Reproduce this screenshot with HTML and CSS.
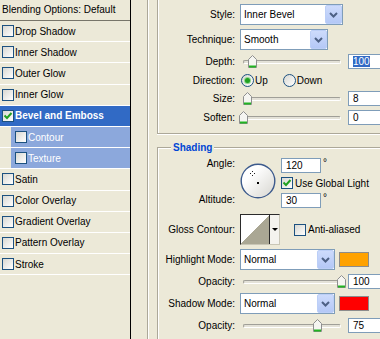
FILE: index.html
```html
<!DOCTYPE html>
<html lang="en">
<head>
  <meta charset="UTF-8">
  <meta name="viewport" content="width=device-width, initial-scale=1.0">
  <title>Layer Style - Bevel and Emboss</title>
  <link rel="stylesheet" href="styles.css">
</head>
<body>

  <!-- shared glyphs -->
  <svg class="defs" width="0" height="0">
    <symbol id="tick" viewBox="0 0 10 10">
      <polyline points="1.5,4.5 4,7 8.5,2" fill="none" stroke="#21a121" stroke-width="2"/>
    </symbol>
    <symbol id="chevron" viewBox="0 0 9 6">
      <polyline points="1,1 4.5,4.5 8,1" fill="none" stroke="#4d6185" stroke-width="2"/>
    </symbol>
    <symbol id="knob" viewBox="0 0 9 13">
      <path d="M0.5 4.5 L4.5 0.5 L8.5 4.5 V12.5 H0.5 Z" fill="#f5f5f1" stroke="#8e8f8f"/>
      <path d="M1 11.5 H8" stroke="#21b421" stroke-width="2"/>
    </symbol>
  </svg>

  <div class="dialog">

    <!-- Styles list -->
    <ul class="style-list">
      <li class="list-head">Blending Options: Default</li>
      <li class="item"><span class="check"></span>Drop Shadow</li>
      <li class="item"><span class="check"></span>Inner Shadow</li>
      <li class="item"><span class="check"></span>Outer Glow</li>
      <li class="item"><span class="check"></span>Inner Glow</li>
      <li class="item active"><span class="check"><svg width="10" height="10"><use href="#tick"/></svg></span>Bevel and Emboss</li>
      <li class="item sub"><span class="check"></span>Contour</li>
      <li class="item sub"><span class="check"></span>Texture</li>
      <li class="item"><span class="check"></span>Satin</li>
      <li class="item"><span class="check"></span>Color Overlay</li>
      <li class="item"><span class="check"></span>Gradient Overlay</li>
      <li class="item"><span class="check"></span>Pattern Overlay</li>
      <li class="item"><span class="check"></span>Stroke</li>
    </ul>

    <!-- Options panel -->
    <div class="options">

      <!-- Structure -->
      <div class="group structure">
        <div class="row row-combo">
          <span class="lbl">Style:</span>
          <div class="combo combo-style"><span>Inner Bevel</span><span class="combo-btn"><svg width="9" height="6"><use href="#chevron"/></svg></span></div>
        </div>
        <div class="row row-combo">
          <span class="lbl">Technique:</span>
          <div class="combo combo-tech"><span>Smooth</span><span class="combo-btn"><svg width="9" height="6"><use href="#chevron"/></svg></span></div>
        </div>
        <div class="row row-slider">
          <span class="lbl">Depth:</span>
          <div class="slider"><div class="track"></div><svg class="thumb" style="left:9%" width="9" height="13"><use href="#knob"/></svg></div>
          <span class="num"><span class="selected">100</span></span>
        </div>
        <div class="row row-radio">
          <span class="lbl">Direction:</span>
          <span class="radio on"></span><span>Up</span>
          <span class="radio radio-next"></span><span>Down</span>
        </div>
        <div class="row row-slider">
          <span class="lbl">Size:</span>
          <div class="slider"><div class="track"></div><svg class="thumb" style="left:4%" width="9" height="13"><use href="#knob"/></svg></div>
          <span class="num">8</span>
        </div>
        <div class="row row-slider">
          <span class="lbl">Soften:</span>
          <div class="slider"><div class="track"></div><svg class="thumb" style="left:0%" width="9" height="13"><use href="#knob"/></svg></div>
          <span class="num">0</span>
        </div>
      </div>

      <!-- Shading -->
      <div class="group shading">
        <span class="group-title">Shading</span>

        <div class="row row-angle">
          <div class="lbl lbl-stack"><span>Angle:</span><span>Altitude:</span></div>
          <svg class="dial" width="36" height="36" viewBox="0 0 36 36">
            <defs>
              <linearGradient id="dialFill" x1="0" y1="0" x2="1" y2="1">
                <stop offset="0.3" stop-color="#ffffff"/>
                <stop offset="1" stop-color="#d6d5cf"/>
              </linearGradient>
            </defs>
            <circle cx="18" cy="18" r="16.8" fill="url(#dialFill)" stroke="#3c5a8c" stroke-width="1.4"/>
            <path d="M12.5 8 V9 M12.5 12 V13 M10 10.5 H11 M14 10.5 H15" stroke="#222" stroke-width="1"/>
            <rect x="17" y="19" width="2" height="2" fill="#000"/>
          </svg>
          <div class="angle-fields">
            <div class="field"><span class="num num-angle">120</span><span class="deg">°</span></div>
            <div class="opt"><span class="check"><svg width="10" height="10"><use href="#tick"/></svg></span>Use Global Light</div>
            <div class="field"><span class="num num-angle">30</span><span class="deg">°</span></div>
          </div>
        </div>

        <div class="row row-contour">
          <span class="lbl">Gloss Contour:</span>
          <div class="contour"><span class="curve"></span><span class="curve-btn"></span></div>
          <div class="opt opt-aa"><span class="check"></span>Anti-aliased</div>
        </div>

        <div class="row row-combo">
          <span class="lbl">Highlight Mode:</span>
          <div class="combo combo-mode"><span>Normal</span><span class="combo-btn"><svg width="9" height="6"><use href="#chevron"/></svg></span></div>
          <span class="swatch swatch-highlight"></span>
        </div>
        <div class="row row-slider">
          <span class="lbl">Opacity:</span>
          <div class="slider"><div class="track"></div><svg class="thumb" style="left:100%" width="9" height="13"><use href="#knob"/></svg></div>
          <span class="num">100</span>
        </div>
        <div class="row row-combo">
          <span class="lbl">Shadow Mode:</span>
          <div class="combo combo-mode"><span>Normal</span><span class="combo-btn"><svg width="9" height="6"><use href="#chevron"/></svg></span></div>
          <span class="swatch swatch-shadow"></span>
        </div>
        <div class="row row-slider">
          <span class="lbl">Opacity:</span>
          <div class="slider"><div class="track"></div><svg class="thumb" style="left:75%" width="9" height="13"><use href="#knob"/></svg></div>
          <span class="num">75</span>
        </div>
      </div>

    </div>
  </div>

</body>
</html>
```

FILE: styles.css
```css
* {
  box-sizing: border-box;
}

body {
  margin: 0;
  background-color: #ece9d8;
  font-family: "Liberation Sans", Arial, sans-serif;
  font-size: 10px;
  color: #000;
}

.defs {
  position: absolute;
}

.dialog {
  display: flex;
  width: 380px;
  height: 339px;
  overflow: hidden;
}

/* Styles list */
.style-list {
  list-style: none;
  margin: 0;
  padding: 0;
  width: 131px;
  flex-shrink: 0;
  border-right: 1px solid #000;
}

.list-head {
  height: 21px;
  line-height: 20px;
  padding-left: 2px;
  border-bottom: 1px solid #77756a;
}

.item {
  display: flex;
  align-items: center;
  height: 21.2px;
  padding-left: 2px;
  border-bottom: 1px solid #fff;
}

.item .check {
  margin-right: 1px;
}

.item.active {
  background-color: #316ac5;
  color: #fff;
  font-weight: bold;
}

.item.sub {
  padding-left: 15px;
  color: #fff;
  background: linear-gradient(to right, #ece9d8 11px, #8ca8dc 11px);
}

.check {
  display: flex;
  align-items: center;
  justify-content: center;
  flex-shrink: 0;
  width: 12px;
  height: 12px;
  border: 1px solid #1c5180;
  background: linear-gradient(135deg, #d8d8d2, #fff);
}

/* Options panel */
.options {
  flex: 1;
  margin-left: 16px;
  padding-left: 9px;
  border-left: 1px solid #aca899;
  box-shadow: inset 1px 0 #fff;
}

.group {
  position: relative;
  display: flex;
  flex-direction: column;
  gap: 4px;
  margin-right: -40px;
  border: 1px solid #aca899;
  box-shadow: inset 1px 1px #fff, 1px 1px #fff;
}

.structure {
  border-top: none;
  padding: 4px 0 8px;
  box-shadow: inset 1px 0 #fff, 0 1px #fff;
}

.shading {
  margin-top: 13px;
  padding-top: 10px;
  height: 200px;
}

.group-title {
  position: absolute;
  top: -6px;
  left: 13px;
  padding: 0 2px;
  line-height: 12px;
  background-color: #ece9d8;
  color: #0046d5;
  font-weight: bold;
}

.row {
  display: flex;
  align-items: center;
}

.row-combo {
  height: 21px;
}

.row-slider {
  height: 15px;
}

.row-radio {
  height: 14px;
}

.lbl {
  width: 77px;
  margin-right: 5px;
  flex-shrink: 0;
  text-align: right;
}

/* combo boxes */
.combo {
  display: flex;
  align-items: center;
  height: 21px;
  border: 1px solid #7f9db9;
  background-color: #fff;
}

.combo span:first-child {
  flex: 1;
  padding-left: 3px;
}

.combo-style {
  width: 103px;
}

.combo-tech {
  width: 88px;
}

.combo-mode {
  width: 95px;
}

.combo-btn {
  display: flex;
  align-items: center;
  justify-content: center;
  width: 17px;
  height: 19px;
  border: 1px solid #bccff7;
  border-radius: 2px;
  background: linear-gradient(#cddbfc, #b4c8f6);
}

.combo-btn svg {
  display: block;
}

/* sliders */
.slider {
  position: relative;
  display: flex;
  align-items: center;
  width: 98px;
  height: 15px;
  margin-left: 3px;
}

.track {
  width: 100%;
  height: 4px;
  border: 1px solid;
  border-color: #a09f98 #fff #fff #a09f98;
  border-radius: 2px;
  background-color: #e4e2d8;
}

.thumb {
  position: absolute;
  top: 1px;
  margin-left: -4px;
}

.num {
  height: 15px;
  width: 40px;
  margin-left: 7px;
  padding-left: 4px;
  line-height: 13px;
  border: 1px solid #7f9db9;
  background-color: #fff;
}

.selected {
  background-color: #316ac5;
  color: #fff;
}

/* radios */
.radio {
  display: flex;
  align-items: center;
  justify-content: center;
  width: 13px;
  height: 13px;
  margin: 0 1px;
  border: 1px solid #1c5180;
  border-radius: 50%;
  background: linear-gradient(135deg, #d8d8d2, #fff);
}

.radio.on::after {
  content: "";
  width: 5px;
  height: 5px;
  border-radius: 50%;
  background-color: #21a121;
  box-shadow: 0 0 0 1px #8fd88f;
}

.radio-next {
  margin-left: 15px;
}

/* angle / altitude */
.row-angle {
  align-items: flex-start;
  height: 52px;
}

.lbl-stack {
  display: flex;
  flex-direction: column;
  justify-content: space-between;
  height: 52px;
  padding-bottom: 4px;
  line-height: 12px;
}

.dial {
  margin-top: 5px;
}

.angle-fields {
  display: flex;
  flex-direction: column;
  margin-left: 5px;
}

.field {
  display: flex;
  align-items: flex-start;
}

.num-angle {
  margin-left: 0;
}

.deg {
  margin-left: 2px;
  line-height: 10px;
}

.opt {
  display: flex;
  align-items: center;
  height: 20px;
}

.opt .check {
  margin-right: 2px;
}

/* gloss contour */
.row-contour {
  height: 31px;
}

.contour {
  display: flex;
  width: 40px;
  height: 31px;
  border: 1px solid;
  border-color: #2b2b2b #c9c6b6 #c9c6b6 #2b2b2b;
}

.curve {
  width: 29px;
  border-right: 1px solid #2b2b2b;
  background: linear-gradient(to bottom right, #fff 50%, #aaa794 50%);
}

.curve-btn {
  display: flex;
  align-items: center;
  justify-content: center;
  flex: 1;
  background-color: #f4f3ee;
}

.curve-btn::after {
  content: "";
  border-left: 3px solid transparent;
  border-right: 3px solid transparent;
  border-top: 3px solid #000;
}

.opt-aa {
  margin-left: 14px;
}

/* colour swatches */
.swatch {
  width: 30px;
  height: 15px;
  margin-left: 4px;
  border: 1px solid #8c8c8c;
}

.swatch-highlight {
  background-color: #ffa200;
}

.swatch-shadow {
  background-color: #ff0000;
}
```
